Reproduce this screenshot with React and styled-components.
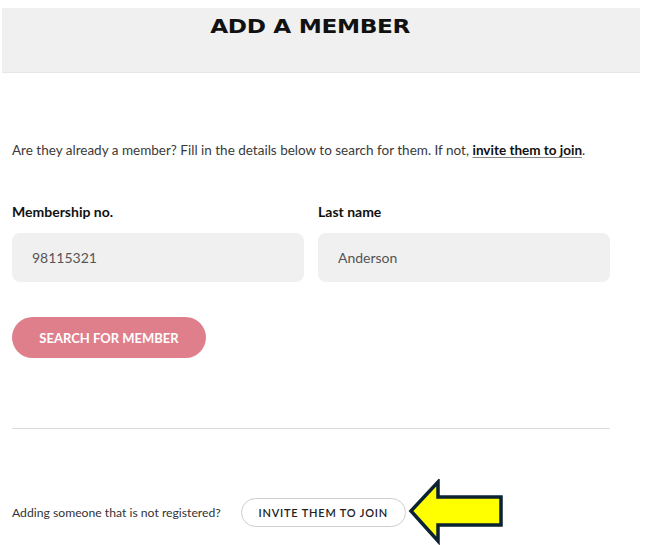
import React from 'react'
import styled, { createGlobalStyle } from 'styled-components'

const Global = createGlobalStyle`
    body {
        margin: 0;
        background: #fff;
        font-family: Lato, "Open Sans", sans-serif;
        color: #222;
    }
`

const Page = styled.div`
    width: 651px;
    height: 545px;
    overflow: hidden;
`
const Header = styled.div`
    margin: 8px 11px 0 2px;
    height: 65px;
    background-color: #f0f0f0;
    border-bottom: 1px solid #e6e6e6;
    box-sizing: border-box;
    padding: 6px 22px 0 0;
    text-align: center;
`
const Title = styled.h1`
    margin: 0;
    font-family: "DejaVu Sans", sans-serif;
    font-size: 20px;
    font-weight: 800;
    letter-spacing: -0.3px;
    color: #111;
    display: inline-block;
    transform: scaleX(1.16);
`
const Content = styled.div`
    padding: 0 41px 0 12px;
`
const Intro = styled.p`
    margin: 68px 0 0;
    font-size: 13.5px;
    color: #3a3a3a;
    line-height: 18px;
`
const InlineLink = styled.a`
    color: #111;
    font-weight: 700;
    text-decoration: underline;
    text-decoration-color: #888;
    text-underline-offset: 2px;
    cursor: pointer;
`
const Fields = styled.div`
    display: grid;
    grid-template-columns: 1fr 1fr;
    column-gap: 14px;
    margin-top: 44px;
`
const Field = styled.div`
    display: flex;
    flex-direction: column;
`
const Label = styled.label`
    font-size: 14px;
    font-weight: 700;
    color: #111;
    line-height: 18px;
    margin-bottom: 12px;
`
const Input = styled.input`
    height: 49px;
    box-sizing: border-box;
    border: none;
    border-radius: 8px;
    background-color: #f0f0f0;
    padding: 0 20px;
    font-family: Lato, sans-serif;
    font-size: 14px;
    color: #555;
    outline: none;
`
const SearchButton = styled.button`
    margin-top: 35px;
    width: 194px;
    height: 41px;
    border: none;
    border-radius: 21px;
    background-color: #e07f8c;
    color: #fff;
    font-family: Lato, sans-serif;
    font-size: 13px;
    font-weight: 700;
    cursor: pointer;
`
const Divider = styled.hr`
    margin: 70px 0 0;
    border: none;
    border-top: 1px solid #dcdcdc;
`
const Footer = styled.div`
    display: flex;
    align-items: center;
    margin-top: 69px;
`
const FooterText = styled.span`
    font-size: 12.2px;
    color: #333;
    margin-right: 20px;
`
const InviteButton = styled.button`
    width: 165px;
    height: 29px;
    border: 1px solid #cfcfcf;
    border-radius: 15px;
    background: #fff;
    font-family: Lato, sans-serif;
    font-size: 11px;
    font-weight: 600;
    letter-spacing: 0.8px;
    color: #222;
    cursor: pointer;
`
const ArrowWrap = styled.div`
    position: relative;
    width: 0;
    height: 29px;
`
const Arrow = styled.svg`
    position: absolute;
    left: 2px;
    top: -19px;
`

const Callout = () => (
    <Arrow width="96" height="66" viewBox="0 0 96 66">
        <polygon
            points="3,32 30,3 30,18 93,18 93,46 30,46 30,62"
            fill="#ffff00"
            stroke="#0b2233"
            strokeWidth="3.5"
            strokeLinejoin="miter"
        />
    </Arrow>
)

const App = () => {
    return (
        <Page>
            <Global />
            <Header>
                <Title>ADD A MEMBER</Title>
            </Header>
            <Content>
                <Intro>
                    Are they already a member? Fill in the details below to search for them. If not,{' '}
                    <InlineLink>invite them to join</InlineLink>.
                </Intro>
                <Fields>
                    <Field>
                        <Label>Membership no.</Label>
                        <Input defaultValue="98115321" />
                    </Field>
                    <Field>
                        <Label>Last name</Label>
                        <Input defaultValue="Anderson" />
                    </Field>
                </Fields>
                <SearchButton>SEARCH FOR MEMBER</SearchButton>
                <Divider />
                <Footer>
                    <FooterText>Adding someone that is not registered?</FooterText>
                    <InviteButton>INVITE THEM TO JOIN</InviteButton>
                    <ArrowWrap>
                        <Callout />
                    </ArrowWrap>
                </Footer>
            </Content>
        </Page>
    )
}

export default App
